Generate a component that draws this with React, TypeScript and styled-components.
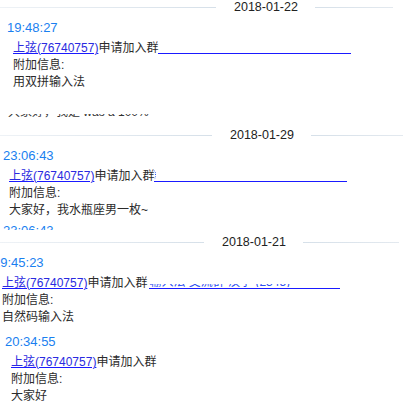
import React from "react";
import styled, { createGlobalStyle } from "styled-components";

const Global = createGlobalStyle`
  html, body {
    margin: 0;
    padding: 0;
    background: #ffffff;
  }
  body {
    width: 408px;
    height: 409px;
    overflow: hidden;
    font-family: "Liberation Sans", Arial, "Noto Sans CJK SC", sans-serif;
    font-size: 12px;
    color: #2b2b2b;
  }
`;

const Page = styled.main`
  width: 408px;
  height: 409px;
  overflow: hidden;
  display: flex;
  flex-direction: column;
`;

const Strip = styled.section<{ $height: number; $top: number }>`
  flex: none;
  height: ${(p) => p.$height}px;
  padding-top: ${(p) => p.$top}px;
  box-sizing: border-box;
  overflow: hidden;
  display: flex;
  flex-direction: column;
`;

const Separator = styled.div`
  flex: none;
  display: flex;
  align-items: center;
  height: 14px;
`;

const SepLine = styled.span<{ $width: number; $side: "left" | "right" }>`
  flex: none;
  width: ${(p) => p.$width}px;
  height: 1px;
  background: ${(p) =>
    p.$side === "left"
      ? "linear-gradient(to right, #eef2f6, #d6e0e9)"
      : "linear-gradient(to right, #d6e0e9, #e3e9ef)"};
`;

const SepDate = styled.span`
  flex: none;
  margin: 0 18px;
  width: 63px;
  font-size: 12.5px;
  line-height: 14px;
  color: #222222;
  white-space: nowrap;
`;

const MessageList = styled.div<{ $gap: number }>`
  display: flex;
  flex-direction: column;
  gap: ${(p) => p.$gap}px;
  padding-top: 5px;
`;

const Message = styled.article<{ $x: number }>`
  display: flex;
  flex-direction: column;
  margin-left: ${(p) => p.$x}px;
`;

const Time = styled.div`
  font-size: 13px;
  line-height: 17px;
  color: #1a7ff0;
  white-space: nowrap;
`;

const Body = styled.div<{ $indent: number }>`
  display: flex;
  flex-direction: column;
  padding-left: ${(p) => p.$indent}px;
`;

const Request = styled.div`
  margin-top: 4px;
  line-height: 17px;
  white-space: nowrap;
`;

const UserLink = styled.a`
  color: #2a2ae0;
  text-decoration: underline;
  text-decoration-color: #1a1aff;
  cursor: pointer;
`;

const GroupLink = styled.span<{ $width: number; $gapLeft: number }>`
  display: inline-block;
  width: ${(p) => p.$width}px;
  height: 14px;
  margin-left: ${(p) => p.$gapLeft}px;
  background: linear-gradient(#1a1aff, #1a1aff) left bottom / 100% 1px no-repeat;
  vertical-align: -2px;
  overflow: hidden;
`;

const Bracket = styled.span`
  display: block;
  width: 3px;
  height: 10px;
  margin-top: 2px;
  margin-left: -2px;
  border-right: 1px dotted #2f55f0;
  border-radius: 0 5px 5px 0;
`;

const HiddenName = styled.span`
  display: flex;
  align-items: flex-end;
  height: 3px;
  margin-top: 9px;
  overflow: hidden;
`;

const HiddenNameText = styled.span`
  flex: none;
  line-height: 9px;
  color: #3050f0;
  white-space: nowrap;
`;

const Line = styled.div`
  line-height: 17px;
  white-space: nowrap;
`;

const CutLine = styled.div`
  display: flex;
  align-items: flex-end;
  height: 4px;
  margin-top: 23px;
  margin-left: 8px;
  overflow: hidden;
`;

const CutText = styled.span`
  flex: none;
  line-height: 17px;
  margin-bottom: -2.5px;
  color: #333333;
  white-space: nowrap;
`;

type Msg = {
  time: string;
  x: number;
  indent?: number;
  note?: string;
  group?: { width: number; gapLeft: number; kind?: "bracket" | "name" };
  timeOnly?: boolean;
};

type StripData = {
  height: number;
  top: number;
  date: string;
  left: number;
  right: number;
  gap: number;
  messages: Msg[];
  cut?: string;
};

const strips: StripData[] = [
  {
    height: 120,
    top: 0,
    date: "2018-01-22",
    left: 216,
    right: 78,
    gap: 7,
    messages: [
      {
        time: "19:48:27",
        x: 7,
        note: "用双拼输入法",
        group: { width: 193, gapLeft: 0 },
      },
    ],
    cut: "大家好，我是 was a 100%",
  },
  {
    height: 110,
    top: 8,
    date: "2018-01-29",
    left: 212,
    right: 92,
    gap: 3,
    messages: [
      {
        time: "23:06:43",
        x: 3,
        note: "大家好，我水瓶座男一枚~",
        group: { width: 193, gapLeft: 0, kind: "bracket" },
      },
      { time: "23:06:43", x: 3, timeOnly: true },
    ],
  },
  {
    height: 179,
    top: 5,
    date: "2018-01-21",
    left: 204,
    right: 96,
    gap: 7,
    messages: [
      {
        time: "19:45:23",
        x: -7,
        indent: 9,
        note: "自然码输入法",
        group: { width: 191, gapLeft: 2, kind: "name" },
      },
      { time: "20:34:55", x: 5, note: "大家好" },
    ],
  },
];

function Group({ g }: { g: NonNullable<Msg["group"]> }) {
  return (
    <GroupLink $width={g.width} $gapLeft={g.gapLeft}>
      {g.kind === "bracket" && <Bracket />}
      {g.kind === "name" && (
        <HiddenName>
          <HiddenNameText>输入法 交流群 汉字 (2345)</HiddenNameText>
        </HiddenName>
      )}
    </GroupLink>
  );
}

export default function App() {
  return (
    <>
      <Global />
      <Page>
        {strips.map((s, i) => (
          <Strip key={i} $height={s.height} $top={s.top}>
            <Separator>
              <SepLine $width={s.left} $side="left" />
              <SepDate>{s.date}</SepDate>
              <SepLine $width={s.right} $side="right" />
            </Separator>
            <MessageList $gap={s.gap}>
              {s.messages.map((m, j) => (
                <Message key={j} $x={m.x}>
                  <Time>{m.time}</Time>
                  {!m.timeOnly && (
                    <Body $indent={m.indent ?? 6}>
                      <Request>
                        <UserLink>上弦(76740757)</UserLink>申请加入群
                        {m.group && <Group g={m.group} />}
                      </Request>
                      <Line>附加信息:</Line>
                      <Line>{m.note}</Line>
                    </Body>
                  )}
                </Message>
              ))}
            </MessageList>
            {s.cut && (
              <CutLine>
                <CutText>{s.cut}</CutText>
              </CutLine>
            )}
          </Strip>
        ))}
      </Page>
    </>
  );
}
